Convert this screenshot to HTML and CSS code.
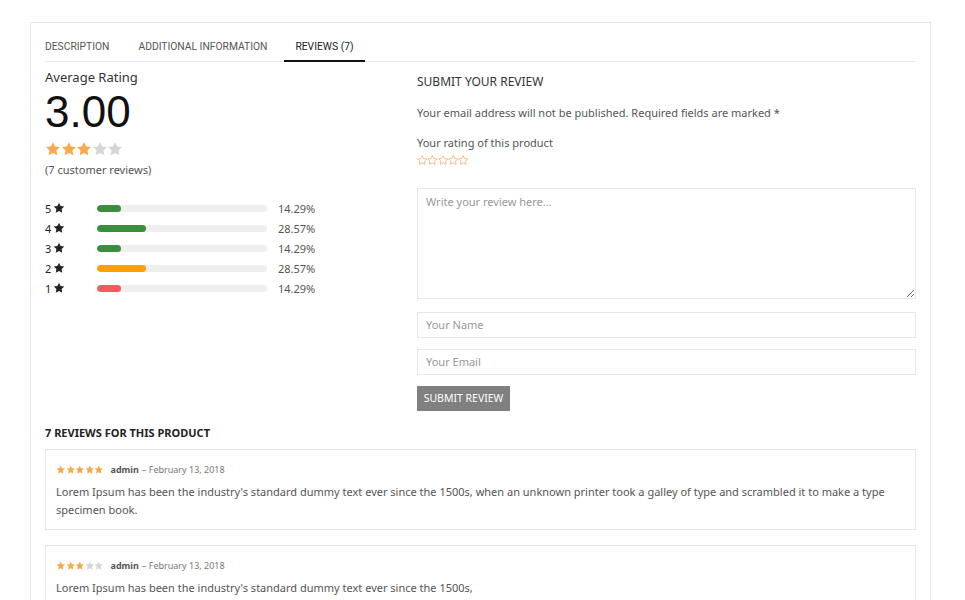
FILE: index.html
```html
<!DOCTYPE html>
<html lang="en">
  <head>
    <meta charset="UTF-8" />
    <meta name="viewport" content="width=device-width, initial-scale=1.0" />
    <title>Product Reviews</title>
    <link rel="stylesheet" href="styles.css">
  </head>
  <body>
    <svg width="0" height="0" class="defs">
      <symbol id="star" viewBox="0 0 24 24">
        <path d="M12 1.5l3.2 6.6 7.3 1-5.3 5.1 1.3 7.2L12 18l-6.5 3.4 1.3-7.2L1.5 9.1l7.3-1z" />
      </symbol>
    </svg>

    <main class="product-tabs">
      <!-- Tabs -->
      <ul class="tab-list">
        <li class="tab">Description</li>
        <li class="tab">Additional Information</li>
        <li class="tab active">Reviews (7)</li>
      </ul>

      <div class="review-top">
        <!-- Average rating -->
        <section class="avg-col">
          <p class="avg-label">Average Rating</p>
          <p class="avg-value">3.00</p>
          <div class="stars stars-lg">
            <svg class="on"><use href="#star" /></svg>
            <svg class="on"><use href="#star" /></svg>
            <svg class="on"><use href="#star" /></svg>
            <svg class="off"><use href="#star" /></svg>
            <svg class="off"><use href="#star" /></svg>
          </div>
          <p class="avg-count">(7 customer reviews)</p>

          <div class="bars">
            <div class="bar-row">
              <span class="bar-label">5 <svg><use href="#star" /></svg></span>
              <span class="bar-track"><span class="bar-fill green" style="width: 14.29%"></span></span>
              <span class="bar-pct">14.29%</span>
            </div>
            <div class="bar-row">
              <span class="bar-label">4 <svg><use href="#star" /></svg></span>
              <span class="bar-track"><span class="bar-fill green" style="width: 28.57%"></span></span>
              <span class="bar-pct">28.57%</span>
            </div>
            <div class="bar-row">
              <span class="bar-label">3 <svg><use href="#star" /></svg></span>
              <span class="bar-track"><span class="bar-fill green" style="width: 14.29%"></span></span>
              <span class="bar-pct">14.29%</span>
            </div>
            <div class="bar-row">
              <span class="bar-label">2 <svg><use href="#star" /></svg></span>
              <span class="bar-track"><span class="bar-fill orange" style="width: 28.57%"></span></span>
              <span class="bar-pct">28.57%</span>
            </div>
            <div class="bar-row">
              <span class="bar-label">1 <svg><use href="#star" /></svg></span>
              <span class="bar-track"><span class="bar-fill red" style="width: 14.29%"></span></span>
              <span class="bar-pct">14.29%</span>
            </div>
          </div>
        </section>

        <!-- Review form -->
        <form class="review-form" method="post">
          <h3 class="form-title">Submit Your Review</h3>
          <p class="form-note">Your email address will not be published. Required fields are marked *</p>
          <p class="form-note rating-label">Your rating of this product</p>
          <div class="stars stars-pick">
            <svg><use href="#star" /></svg>
            <svg><use href="#star" /></svg>
            <svg><use href="#star" /></svg>
            <svg><use href="#star" /></svg>
            <svg><use href="#star" /></svg>
          </div>
          <textarea class="form-input form-text" placeholder="Write your review here..."></textarea>
          <input type="text" class="form-input" placeholder="Your Name" />
          <input type="email" class="form-input" placeholder="Your Email" />
          <button type="submit" class="submit-btn">Submit Review</button>
        </form>
      </div>

      <!-- Review list -->
      <h4 class="list-title">7 Reviews for this product</h4>

      <div class="review-item">
        <div class="review-meta">
          <span class="stars stars-sm">
            <svg class="on"><use href="#star" /></svg>
            <svg class="on"><use href="#star" /></svg>
            <svg class="on"><use href="#star" /></svg>
            <svg class="on"><use href="#star" /></svg>
            <svg class="on"><use href="#star" /></svg>
          </span>
          <b>admin</b> &ndash; February 13, 2018
        </div>
        <p class="review-text">Lorem Ipsum has been the industry's standard dummy text ever since the 1500s, when an unknown printer took a galley of type and scrambled it to make a type specimen book.</p>
      </div>

      <div class="review-item">
        <div class="review-meta">
          <span class="stars stars-sm">
            <svg class="on"><use href="#star" /></svg>
            <svg class="on"><use href="#star" /></svg>
            <svg class="on"><use href="#star" /></svg>
            <svg class="off"><use href="#star" /></svg>
            <svg class="off"><use href="#star" /></svg>
          </span>
          <b>admin</b> &ndash; February 13, 2018
        </div>
        <p class="review-text">Lorem Ipsum has been the industry's standard dummy text ever since the 1500s,</p>
      </div>
    </main>
  </body>
</html>
```

FILE: styles.css
```css
body {
  margin: 0;
  background: #fff;
  font-family: "Noto Sans", "Open Sans", sans-serif;
  color: #555;
}
p,
h3,
h4 {
  margin: 0;
}
.defs {
  position: absolute;
}
.product-tabs {
  width: 901px;
  box-sizing: border-box;
  margin: 22px 0 0 30px;
  padding: 16px 14px 40px;
  border: 1px solid #e6e6e6;
  border-bottom: none;
}
.tab-list {
  display: flex;
  margin: 0;
  padding: 0;
  list-style: none;
  border-bottom: 1px solid #e8e8e8;
}
.tab {
  font-family: Roboto, sans-serif;
  font-size: 10.3px;
  line-height: 16px;
  text-transform: uppercase;
  color: #555;
  padding: 0 11px 5px;
  margin-right: 6px;
  margin-bottom: -1px;
  border-bottom: 2px solid transparent;
}
.tab:first-child {
  padding-left: 0;
  margin-right: 7px;
}
.tab.active {
  color: #222;
  border-bottom-color: #111;
}
.review-top {
  display: grid;
  grid-template-columns: 372px 1fr;
}

/* average column */
.avg-label {
  margin-top: 8px;
  font-size: 13px;
  line-height: 14px;
  color: #333;
}
.avg-value {
  font-family: "Liberation Sans", Arial, sans-serif;
  font-size: 44px;
  line-height: 56px;
  color: #111;
}
.stars {
  display: flex;
}
.stars svg {
  fill: #f9a94d;
}
.stars svg.off {
  fill: #d6d5dc;
}
.stars-lg {
  margin-top: 1px;
}
.stars-lg svg {
  width: 16px;
  height: 16px;
  margin-right: -0.5px;
}
.avg-count {
  margin-top: 4px;
  font-size: 11px;
  line-height: 18px;
  color: #555;
}
.bars {
  margin-top: 19px;
}
.bar-row {
  display: flex;
  align-items: center;
  height: 20px;
  font-size: 11px;
}
.bar-label {
  width: 52px;
  color: #222;
  display: flex;
  align-items: center;
  gap: 2px;
}
.bar-label svg {
  width: 12px;
  height: 12px;
  fill: #222;
}
.bar-track {
  width: 170px;
  height: 7px;
  border-radius: 4px;
  background: #efefef;
  overflow: hidden;
}
.bar-fill {
  display: block;
  height: 100%;
  border-radius: 4px;
}
.green {
  background: #3a8f3c;
}
.orange {
  background: #ff9e0b;
}
.red {
  background: #f25c5c;
}
.bar-pct {
  margin-left: 11px;
  color: #555;
}

/* review form */
.review-form {
  display: flex;
  flex-direction: column;
  padding-top: 11px;
}
.form-title {
  font-size: 12px;
  line-height: 18px;
  font-weight: 400;
  text-transform: uppercase;
  color: #333;
}
.form-note {
  margin-top: 13px;
  font-size: 11px;
  line-height: 18px;
  color: #555;
}
.rating-label {
  margin-top: 12px;
}
.stars-pick {
  margin-top: 3px;
}
.stars-pick svg {
  width: 10.5px;
  height: 10.5px;
  fill: none;
  stroke: #f6a96a;
  stroke-width: 1.8;
  margin-right: -0.2px;
}
.form-input {
  font-family: inherit;
  font-size: 11px;
  color: #555;
  height: 26px;
  box-sizing: border-box;
  border: 1px solid #e6e6e6;
  padding: 0 8px;
  margin-bottom: 11px;
  outline: none;
}
.form-input::placeholder {
  color: #999;
}
.form-text {
  height: 111px;
  margin-top: 22px;
  margin-bottom: 13px;
  padding: 5px 8px;
  resize: vertical;
}
.submit-btn {
  align-self: flex-start;
  width: 93px;
  height: 25px;
  border: none;
  background: #808080;
  color: #fff;
  font-family: inherit;
  font-size: 10.5px;
  text-transform: uppercase;
  padding: 0;
}

/* review list */
.list-title {
  margin-top: 13px;
  font-size: 11px;
  line-height: 18px;
  font-weight: 700;
  text-transform: uppercase;
  color: #222;
}
.review-item {
  margin-top: 7px;
  margin-bottom: 15px;
  border: 1px solid #e6e6e6;
  padding: 12px 10px 10px;
}
.review-item + .review-item {
  margin-top: 0;
}
.review-meta {
  display: flex;
  align-items: center;
  font-size: 9px;
  line-height: 16px;
  color: #777;
}
.review-meta b {
  color: #555;
  margin: 0 3px 0 0;
}
.stars-sm {
  margin-right: 7px;
}
.stars-sm svg {
  width: 9.5px;
  height: 9.5px;
}
.review-text {
  margin-top: 5px;
  font-size: 11px;
  line-height: 18px;
  color: #555;
}
```
